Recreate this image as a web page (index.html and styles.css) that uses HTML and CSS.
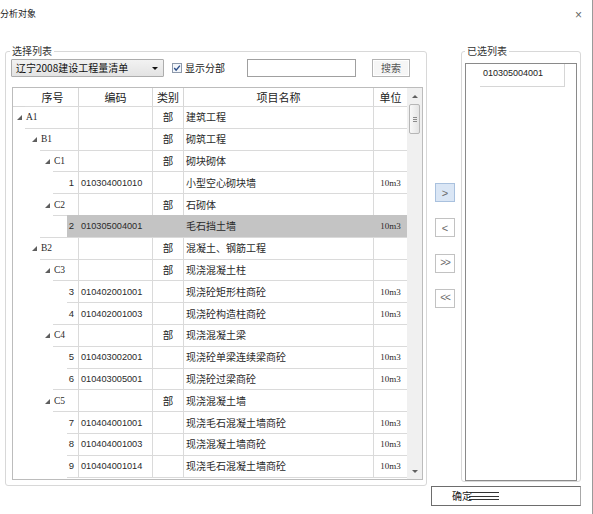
FILE: index.html
```html
<!DOCTYPE html>
<html>
<head>
<meta charset="utf-8">
<title>分析对象</title>
<link rel="stylesheet" href="styles.css">
</head>
<body>
<div class="window">
  <div class="titlebar">
    <span class="title">分析对象</span>
    <span class="close">×</span>
  </div>
  <div class="main">
    <fieldset class="group left-group">
      <legend>选择列表</legend>
      <div class="toolbar">
        <div class="combo"><span class="combo-text">辽宁2008建设工程量清单</span><span class="combo-arrow"></span></div>
        <span class="checkbox"><svg width="10" height="10" viewBox="0 0 10 10"><rect x="0.5" y="0.5" width="9" height="9" fill="#f3f6fa" stroke="#8d99ab"/><path d="M2.2 5.1 L4.1 7.1 L7.9 2.6" fill="none" stroke="#2d4f8a" stroke-width="1.4"/></svg></span>
        <span class="check-label">显示分部</span>
        <div class="search-input"></div>
        <div class="search-btn">搜索</div>
      </div>
      <div class="grid">
        <div class="grid-main">
          <div class="grid-header">
            <div class="hcell h-seq">序号</div>
            <div class="hcell h-code">编码</div>
            <div class="hcell h-type">类别</div>
            <div class="hcell h-name">项目名称</div>
            <div class="hcell h-unit">单位</div>
          </div>
          <div class="rows">
            <div class="row l0">
              <div class="indent"><span class="tri"></span></div>
              <div class="cells"><div class="cell c-seq"><span class="node">A1</span></div><div class="cell c-code"></div><div class="cell c-type">部</div><div class="cell c-name">建筑工程</div><div class="cell c-unit"></div></div>
            </div>
            <div class="row l1">
              <div class="indent"><span class="tri"></span></div>
              <div class="cells"><div class="cell c-seq"><span class="node">B1</span></div><div class="cell c-code"></div><div class="cell c-type">部</div><div class="cell c-name">砌筑工程</div><div class="cell c-unit"></div></div>
            </div>
            <div class="row l2">
              <div class="indent"><span class="tri"></span></div>
              <div class="cells"><div class="cell c-seq"><span class="node">C1</span></div><div class="cell c-code"></div><div class="cell c-type">部</div><div class="cell c-name">砌块砌体</div><div class="cell c-unit"></div></div>
            </div>
            <div class="row l3">
              <div class="indent"></div>
              <div class="cells"><div class="cell c-seq num">1</div><div class="cell c-code">010304001010</div><div class="cell c-type"></div><div class="cell c-name">小型空心砌块墙</div><div class="cell c-unit">10m3</div></div>
            </div>
            <div class="row l2">
              <div class="indent"><span class="tri"></span></div>
              <div class="cells"><div class="cell c-seq"><span class="node">C2</span></div><div class="cell c-code"></div><div class="cell c-type">部</div><div class="cell c-name">石砌体</div><div class="cell c-unit"></div></div>
            </div>
            <div class="row l3 sel">
              <div class="indent"></div>
              <div class="cells"><div class="cell c-seq num">2</div><div class="cell c-code">010305004001</div><div class="cell c-type"></div><div class="cell c-name">毛石挡土墙</div><div class="cell c-unit">10m3</div></div>
            </div>
            <div class="row l1">
              <div class="indent"><span class="tri"></span></div>
              <div class="cells"><div class="cell c-seq"><span class="node">B2</span></div><div class="cell c-code"></div><div class="cell c-type">部</div><div class="cell c-name">混凝土、钢筋工程</div><div class="cell c-unit"></div></div>
            </div>
            <div class="row l2">
              <div class="indent"><span class="tri"></span></div>
              <div class="cells"><div class="cell c-seq"><span class="node">C3</span></div><div class="cell c-code"></div><div class="cell c-type">部</div><div class="cell c-name">现浇混凝土柱</div><div class="cell c-unit"></div></div>
            </div>
            <div class="row l3">
              <div class="indent"></div>
              <div class="cells"><div class="cell c-seq num">3</div><div class="cell c-code">010402001001</div><div class="cell c-type"></div><div class="cell c-name">现浇砼矩形柱商砼</div><div class="cell c-unit">10m3</div></div>
            </div>
            <div class="row l3">
              <div class="indent"></div>
              <div class="cells"><div class="cell c-seq num">4</div><div class="cell c-code">010402001003</div><div class="cell c-type"></div><div class="cell c-name">现浇砼构造柱商砼</div><div class="cell c-unit">10m3</div></div>
            </div>
            <div class="row l2">
              <div class="indent"><span class="tri"></span></div>
              <div class="cells"><div class="cell c-seq"><span class="node">C4</span></div><div class="cell c-code"></div><div class="cell c-type">部</div><div class="cell c-name">现浇混凝土梁</div><div class="cell c-unit"></div></div>
            </div>
            <div class="row l3">
              <div class="indent"></div>
              <div class="cells"><div class="cell c-seq num">5</div><div class="cell c-code">010403002001</div><div class="cell c-type"></div><div class="cell c-name">现浇砼单梁连续梁商砼</div><div class="cell c-unit">10m3</div></div>
            </div>
            <div class="row l3">
              <div class="indent"></div>
              <div class="cells"><div class="cell c-seq num">6</div><div class="cell c-code">010403005001</div><div class="cell c-type"></div><div class="cell c-name">现浇砼过梁商砼</div><div class="cell c-unit">10m3</div></div>
            </div>
            <div class="row l2">
              <div class="indent"><span class="tri"></span></div>
              <div class="cells"><div class="cell c-seq"><span class="node">C5</span></div><div class="cell c-code"></div><div class="cell c-type">部</div><div class="cell c-name">现浇混凝土墙</div><div class="cell c-unit"></div></div>
            </div>
            <div class="row l3">
              <div class="indent"></div>
              <div class="cells"><div class="cell c-seq num">7</div><div class="cell c-code">010404001001</div><div class="cell c-type"></div><div class="cell c-name">现浇毛石混凝土墙商砼</div><div class="cell c-unit">10m3</div></div>
            </div>
            <div class="row l3">
              <div class="indent"></div>
              <div class="cells"><div class="cell c-seq num">8</div><div class="cell c-code">010404001003</div><div class="cell c-type"></div><div class="cell c-name">现浇混凝土墙商砼</div><div class="cell c-unit">10m3</div></div>
            </div>
            <div class="row l3">
              <div class="indent"></div>
              <div class="cells"><div class="cell c-seq num">9</div><div class="cell c-code">010404001014</div><div class="cell c-type"></div><div class="cell c-name">现浇毛石混凝土墙商砼</div><div class="cell c-unit">10m3</div></div>
            </div>
          </div>
        </div>
        <div class="scrollbar">
          <div class="sb-btn"><span class="sb-up"></span></div>
          <div class="thumb"><span class="grip"></span></div>
          <div class="sb-space"></div>
          <div class="sb-btn"><span class="sb-down"></span></div>
        </div>
      </div>
    </fieldset>
    <div class="right-col">
      <div class="transfer">
        <div class="arrows">
          <div class="arrow-btn active">&gt;</div>
          <div class="arrow-btn">&lt;</div>
          <div class="arrow-btn dbl">&gt;&gt;</div>
          <div class="arrow-btn dbl">&lt;&lt;</div>
        </div>
        <fieldset class="group right-group">
          <legend>已选列表</legend>
          <div class="listbox">
            <div class="tile">010305004001</div>
          </div>
        </fieldset>
      </div>
      <div class="ok-btn"><span>确定</span><span class="ok-lines"></span></div>
    </div>
  </div>
</div>
</body>
</html>
```

FILE: styles.css
```css
* { box-sizing: border-box; }
html, body { margin: 0; padding: 0; background: #fff; }
body {
  width: 593px;
  height: 514px;
  overflow: hidden;
  font-family: "Noto Sans CJK SC", "Liberation Sans", sans-serif;
  font-size: 10px;
  color: #222;
}
.window {
  width: 593px;
  height: 514px;
  border-right: 1px solid #9a9a9a;
}
.titlebar {
  height: 44px;
  display: flex;
  justify-content: space-between;
  align-items: flex-start;
  padding-top: 8px;
  padding-right: 10px;
}
.title { margin-left: 0; font-size: 9px; line-height: 12px; color: #222; }
.close {
  font-family: "Liberation Sans", sans-serif;
  font-size: 12px;
  line-height: 12px;
  margin-top: 1px;
  color: #666;
}
.main {
  display: flex;
  align-items: flex-start;
  padding-left: 5px;
}
.group {
  margin: 0;
  border: 1px solid #d8d8d8;
  border-radius: 3px;
  min-width: 0;
}
.group legend {
  padding: 0 2px;
  font-size: 10px;
  line-height: 14px;
  color: #333;
}
.left-group {
  width: 422px;
  padding: 1px 3px 5px 4px;
}
.toolbar {
  display: flex;
  align-items: center;
  height: 18px;
}
.combo {
  width: 153px;
  height: 18px;
  margin-left: 1px;
  border: 1px solid #adadad;
  border-radius: 1px;
  background: linear-gradient(#f2f2f2, #e3e3e3);
  display: flex;
  align-items: center;
  justify-content: space-between;
  padding-left: 4px;
  padding-right: 5px;
  color: #111;
  line-height: 12px;
}
.combo-arrow {
  width: 0;
  height: 0;
  border-left: 3px solid transparent;
  border-right: 3px solid transparent;
  border-top: 3px solid #111;
}
.checkbox { margin-left: 8px; width: 10px; height: 10px; display: flex; }
.check-label { margin-left: 3px; line-height: 12px; }
.search-input {
  margin-left: 22px;
  width: 109px;
  height: 18px;
  border: 1px solid #a0a0a0;
  background: #fff;
}
.search-btn {
  margin-left: 16px;
  width: 38px;
  height: 18px;
  border: 1px solid #b4b4b4;
  background: #f6f6f6;
  box-shadow: inset 0 0 0 1px #fff;
  display: flex;
  align-items: center;
  justify-content: center;
  color: #555;
  line-height: 12px;
}
.grid {
  margin-left: 2px;
  margin-top: 10px;
  width: 411px;
  height: 393px;
  border: 1px solid #bcbcbc;
  display: flex;
}
.grid-main {
  width: 394px;
  height: 391px;
  overflow: hidden;
}
.grid-header {
  display: flex;
  height: 19px;
  border-bottom: 1px solid #d6d6d6;
}
.hcell {
  display: flex;
  align-items: center;
  justify-content: center;
  border-right: 1px solid #d6d6d6;
  font-size: 11px;
  line-height: 13px;
  color: #222;
}
.h-seq { width: 66px; padding-left: 14px; }
.h-code { width: 74px; }
.h-type { width: 31px; }
.h-name { width: 190px; }
.h-unit { width: 33px; border-right: none; }
.row {
  display: flex;
  height: 22.8px;
  margin-top: -1px;
}
.indent {
  display: flex;
  align-items: center;
  justify-content: flex-end;
  padding-right: 3px;
  flex: none;
}
.l0 .indent { width: 12px; }
.l1 .indent { width: 27px; }
.l2 .indent { width: 40px; }
.l3 .indent { width: 54px; }
.tri {
  width: 0;
  height: 0;
  border-left: 5px solid transparent;
  border-bottom: 5px solid #5e5e5e;
  margin-top: 1px;
}
.cells {
  flex: 1;
  display: flex;
  border-top: 1px solid #dadada;
  border-bottom: 1px solid #dadada;
}
.cell {
  display: flex;
  align-items: center;
  border-right: 1px solid #dadada;
  line-height: 12px;
  white-space: nowrap;
  overflow: hidden;
  color: #2a2a2a;
}
.c-seq { flex: 1; min-width: 0; }
.c-seq.num {
  justify-content: flex-end;
  padding-right: 4px;
  font-family: "Liberation Sans", sans-serif;
  font-size: 9.5px;
}
.node {
  font-family: "Liberation Serif", serif;
  font-size: 9.5px;
  padding-left: 1px;
}
.c-code {
  width: 74px;
  padding-left: 2px;
  font-family: "Liberation Sans", sans-serif;
  font-size: 9.2px;
}
.c-type { width: 31px; justify-content: center; font-size: 10.5px; color: #222; }
.c-name { width: 190px; padding-left: 2px; }
.c-unit {
  width: 33px;
  border-right: none;
  justify-content: center;
  font-family: "Liberation Serif", serif;
  font-size: 9px;
}
.row.sel .cells { background: #c4c4c4; border-color: #c4c4c4; }
.row.sel .cell { border-right-color: #c4c4c4; }
.scrollbar {
  width: 15px;
  height: 391px;
  background: #f0f0f0;
  display: flex;
  flex-direction: column;
  align-items: center;
}
.sb-btn {
  width: 15px;
  height: 16px;
  display: flex;
  align-items: center;
  justify-content: center;
  flex: none;
}
.sb-up {
  width: 0; height: 0;
  border-left: 3px solid transparent;
  border-right: 3px solid transparent;
  border-bottom: 3px solid #606060;
}
.sb-down {
  width: 0; height: 0;
  border-left: 3px solid transparent;
  border-right: 3px solid transparent;
  border-top: 3px solid #606060;
}
.thumb {
  width: 11px;
  height: 30px;
  flex: none;
  border: 1px solid #b6b6b6;
  border-radius: 2px;
  background: linear-gradient(to right, #f8f8f8, #e4e4e4);
  display: flex;
  align-items: center;
  justify-content: center;
}
.grip {
  width: 4px;
  height: 5px;
  background: repeating-linear-gradient(#8a8a8a 0 1px, transparent 1px 2px);
}
.sb-space { flex: 1; }
.right-col {
  display: flex;
  flex-direction: column;
}
.transfer {
  display: flex;
  align-items: flex-start;
}
.arrows {
  width: 20px;
  margin: 139px 6px 0 8px;
  display: flex;
  flex-direction: column;
  gap: 16.3px;
}
.arrow-btn {
  height: 19px;
  border: 1px solid #c2c2c2;
  background: #fff;
  display: flex;
  align-items: center;
  justify-content: center;
  font-family: "Liberation Sans", sans-serif;
  font-size: 11px;
  color: #6a6a6a;
  line-height: 12px;
}
.arrow-btn.active { background: #dae6f5; border-color: #a9c1de; }
.arrow-btn.dbl { letter-spacing: -1px; font-size: 10px; }
.right-group {
  width: 120px;
  padding: 5px 3px 0 3px;
}
.listbox {
  height: 418px;
  border: 1px solid #8a8a8a;
  background: #fff;
  padding-left: 14px;
}
.tile {
  width: 85px;
  height: 23px;
  border-right: 1px solid #d6d6d6;
  border-bottom: 1px solid #d6d6d6;
  padding-left: 3px;
  padding-top: 4px;
  font-family: "Liberation Sans", sans-serif;
  font-size: 9px;
  line-height: 11px;
  color: #222;
}
.ok-btn {
  margin: 4px 0 0 4px;
  width: 150px;
  height: 20px;
  border: 1px solid #6d6d6d;
  border-right-color: #a8a8a8;
  display: flex;
  align-items: center;
  padding-left: 20px;
  line-height: 12px;
  color: #222;
}
.ok-lines {
  width: 30px;
  height: 8px;
  margin-left: -3px;
  border-top: 1px solid #333;
  border-bottom: 1px solid #333;
  background: linear-gradient(transparent 3px, #333 3px 4px, transparent 4px);
}
```
